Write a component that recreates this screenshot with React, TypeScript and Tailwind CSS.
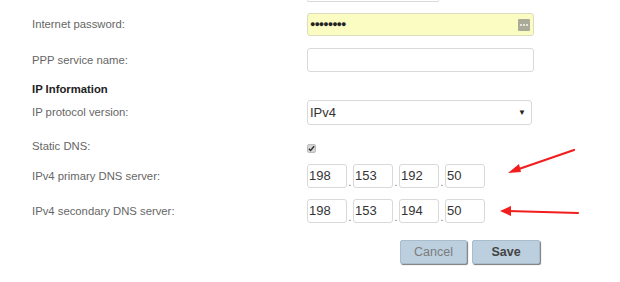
const labelCls = 'w-[275px] shrink-0 text-[11.3px] text-[#666]';
const boxCls = 'border border-[#d9d9d9] rounded-[3px] bg-white';

function Octets({ values }: { values: string[] }) {
  return (
    <div className="flex items-end">
      {values.map((v, i) => (
        <div key={i} className="flex items-end">
          <div className={`${boxCls} w-[40px] h-[24px] flex items-center pl-[1px] text-[13px] text-[#333]`}>{v}</div>
          {i < values.length - 1 && <span className="w-[6px] text-center text-[10px] leading-[10px] text-[#666]">.</span>}
        </div>
      ))}
    </div>
  );
}

export default function App() {
  return (
    <div className="relative w-[620px] h-[282px] overflow-hidden bg-white font-['Liberation_Sans',Arial,sans-serif]">
      <div className="flex flex-col pl-[32px]">
        {/* bottom of the field above */}
        <div className="flex">
          <div className="w-[275px]" />
          <div className="w-[132px] h-[2px] border-x border-b border-[#d9d9d9] rounded-b-[3px]" />
        </div>

        {/* Internet password */}
        <div className="flex items-center mt-[11px] h-[23px]">
          <div className={labelCls}>Internet password:</div>
          <div className="w-[227px] h-[23px] border border-[#dcdcc0] rounded-[3px] bg-[#fafcc2] flex items-center justify-between pl-[2px] pr-[3px]">
            <span className="text-[9px] tracking-[-1px] text-[#222] leading-none">●●●●●●●●</span>
            <span className="w-[12px] h-[12px] rounded-[1px] bg-[#a9aa97] flex items-center justify-center gap-[1px]">
              <span className="w-[2px] h-[2px] bg-[#e4e4d8]" />
              <span className="w-[2px] h-[2px] bg-[#e4e4d8]" />
              <span className="w-[2px] h-[2px] bg-[#e4e4d8]" />
            </span>
          </div>
        </div>

        {/* PPP service name */}
        <div className="flex items-center mt-[12px] h-[24px]">
          <div className={labelCls}>PPP service name:</div>
          <div className={`${boxCls} w-[227px] h-[24px]`} />
        </div>

        <div className="mt-[10px] text-[11.3px] font-bold text-[#222] leading-[14px]">IP Information</div>

        {/* IP protocol version */}
        <div className="flex items-center mt-[4px] h-[25px]">
          <div className={labelCls}>IP protocol version:</div>
          <div className={`${boxCls} w-[225px] h-[25px] flex items-center justify-between pl-[2px] pr-[5px] text-[13px] text-[#333]`}>
            <span>IPv4</span>
            <span className="text-[8px] text-[#222]">▼</span>
          </div>
        </div>

        {/* Static DNS */}
        <div className="flex items-center mt-[14px] h-[14px]">
          <div className={labelCls}>Static DNS:</div>
          <div className="w-[9px] h-[9px] mt-[5px] rounded-[2px] bg-[#d6d6d6] border border-[#bdbdbd] flex items-center justify-center">
            <svg width="7" height="7" viewBox="0 0 8 8">
              <path d="M1 4.2 L3 6.2 L7 1.5" fill="none" stroke="#333" strokeWidth="1.6" />
            </svg>
          </div>
        </div>

        {/* Primary DNS */}
        <div className="flex items-center mt-[11px] h-[24px]">
          <div className={labelCls}>IPv4 primary DNS server:</div>
          <Octets values={['198', '153', '192', '50']} />
        </div>

        {/* Secondary DNS */}
        <div className="flex items-center mt-[11px] h-[24px]">
          <div className={labelCls}>IPv4 secondary DNS server:</div>
          <Octets values={['198', '153', '194', '50']} />
        </div>

        {/* Buttons */}
        <div className="flex mt-[17px] pl-[368px] gap-[5px]">
          <button className="w-[67px] h-[24px] bg-[#bccfdf] border border-[#a9bccc] rounded-[2px] shadow-[1px_1px_1px_#7a7a7a] text-[12.5px] text-[#7c7c7c]">
            Cancel
          </button>
          <button className="w-[68px] h-[24px] bg-[#bccfdf] border border-[#a9bccc] rounded-[2px] shadow-[1px_1px_1px_#7a7a7a] text-[12.5px] font-bold text-[#444]">
            Save
          </button>
        </div>
      </div>

      {/* red annotation arrows */}
      <svg className="absolute left-0 top-0" width="620" height="282" viewBox="0 0 620 282">
        <line x1="574" y1="150" x2="516" y2="170" stroke="#f21d1d" strokeWidth="2.2" strokeLinecap="round" />
        <polygon points="508,173 519,164 521,172" fill="#f21d1d" />
        <line x1="578" y1="213" x2="508" y2="211" stroke="#f21d1d" strokeWidth="2.2" strokeLinecap="round" />
        <polygon points="500,211 511,206 511,216" fill="#f21d1d" />
      </svg>
    </div>
  );
}
